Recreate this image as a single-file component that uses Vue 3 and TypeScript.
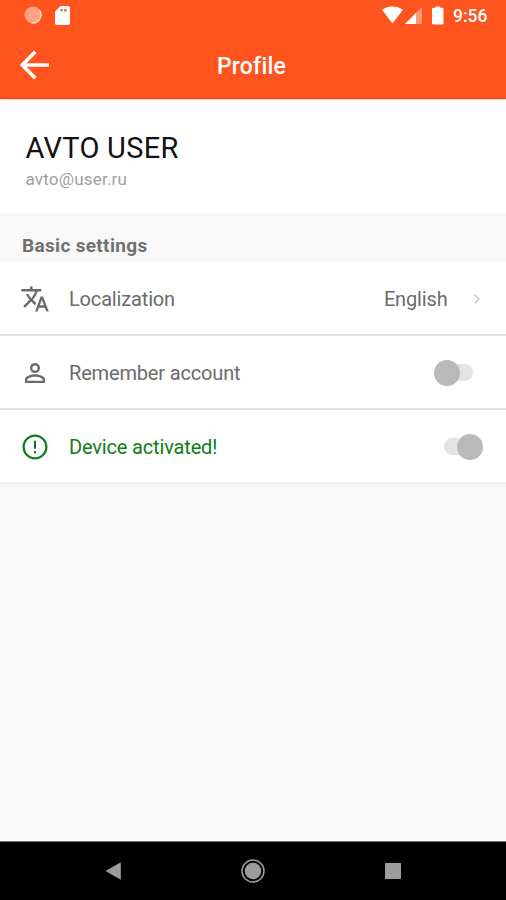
<script setup lang="ts">
import { ref } from 'vue'

interface Setting {
  id: string
  label: string
  icon: string
  kind: 'link' | 'switch'
  value?: string
  on?: boolean
  positive?: boolean
}

const settings = ref<Setting[]>([
  {
    id: 'localization',
    label: 'Localization',
    kind: 'link',
    value: 'English',
    icon: 'M12.87 15.07l-2.54-2.51.03-.03A17.52 17.52 0 0 0 14.07 6H17V4h-7V2H8v2H1v1.99h11.17C11.5 7.92 10.44 9.75 9 11.35 8.07 10.32 7.3 9.19 6.69 8h-2c.73 1.63 1.73 3.17 2.98 4.56l-5.09 5.02L4 19l5-5 3.11 3.11.76-2.04zM18.5 10h-2L12 22h2l1.12-3h4.75L21 22h2l-4.5-12zm-2.62 7l1.62-4.33L19.12 17h-3.24z',
  },
  {
    id: 'remember',
    label: 'Remember account',
    kind: 'switch',
    on: false,
    icon: 'M12 5.9a2.1 2.1 0 1 1 0 4.2 2.1 2.1 0 0 1 0-4.2m0 9c2.97 0 6.1 1.46 6.1 2.1v1.1H5.9V17c0-.64 3.13-2.1 6.1-2.1M12 4C9.79 4 8 5.79 8 8s1.79 4 4 4 4-1.79 4-4-1.79-4-4-4zm0 9c-2.67 0-8 1.34-8 4v3h16v-3c0-2.66-5.33-4-8-4z',
  },
  {
    id: 'device',
    label: 'Device activated!',
    kind: 'switch',
    on: true,
    positive: true,
    icon: 'M11.200 15.200h1.600v1.700h-1.600zm0-8.200h1.600v6.300h-1.600zm.79-5C6.47 2 2 6.48 2 12s4.47 10 9.99 10C17.52 22 22 17.52 22 12S17.52 2 11.99 2zM12 20.200c-4.53 0-8.200-3.670-8.200-8.200s3.670-8.200 8.200-8.200 8.200 3.670 8.200 8.200-3.670 8.200-8.200 8.200z',
  },
])

function activate(item: Setting) {
  if (item.kind === 'switch') item.on = !item.on
}
</script>

<template>
  <div class="screen">
    <header class="top">
      <div class="status">
        <svg class="sync" viewBox="0 0 18 18">
          <circle cx="9" cy="9" r="8.5" fill="#ffa183" />
          <path d="M15.200 4A8 8 0 0 1 7.500 16.800" fill="none" stroke="#ffe3d9" stroke-width="1.3" />
        </svg>
        <svg class="card" viewBox="0 0 15 19">
          <path fill="#fff" fill-rule="evenodd" d="M5.5 0H13a2 2 0 0 1 2 2v15a2 2 0 0 1-2 2H2a2 2 0 0 1-2-2V5.500zM5.500 3v2.500h2.200V3zm3.700 0v2.500h2.300V3z" />
        </svg>
        <span class="gap"></span>
        <svg class="wifi" viewBox="0 0 22 18">
          <path fill="#fff" d="M0 3.500C6-1.200 16-1.200 22 3.500L11 18z" />
        </svg>
        <svg class="signal" viewBox="0 0 17 17">
          <path fill="#fff" fill-opacity=".4" d="M17 0v17H0z" />
          <path fill="#fff" d="M11 6v11H0z" />
        </svg>
        <svg class="battery" viewBox="0 0 12 19">
          <path fill="#fff" d="M3.500 0h5v1.500H10.500Q12 1.500 12 3v14.500q0 1.500-1.500 1.500h-9Q0 19 0 17.500V3Q0 1.500 1.500 1.500h2z" />
        </svg>
        <span class="clock">9:56</span>
      </div>
      <div class="bar">
        <svg class="back" viewBox="0 0 30 30">
          <path d="M15.300 1.800L2.300 15l13 13.200M2.300 15H29" fill="none" stroke="#fff" stroke-width="3.700" />
        </svg>
        <h1>Profile</h1>
      </div>
    </header>

    <section class="user">
      <div class="name">AVTO USER</div>
      <div class="mail">avto@user.ru</div>
    </section>

    <h2 class="heading">Basic settings</h2>

    <ul class="list">
      <li
        v-for="item in settings"
        :key="item.id"
        class="row"
        :class="{ positive: item.positive }"
        @click="activate(item)"
      >
        <svg class="icon" viewBox="0 0 24 24"><path :d="item.icon" fill="currentColor" /></svg>
        <span class="label">{{ item.label }}</span>
        <template v-if="item.kind === 'link'">
          <span class="value">{{ item.value }}</span>
          <svg class="chevron" viewBox="0 0 6 10">
            <path d="M.7.700L5 5 .7 9.300" fill="none" stroke="#c4c4c4" stroke-width="1.400" />
          </svg>
        </template>
        <span v-else class="switch" :class="{ on: item.on }">
          <span class="track"></span>
          <span class="thumb"></span>
        </span>
      </li>
    </ul>

    <nav class="nav">
      <svg viewBox="0 0 24 24"><path d="M4.500 12L19.800 3.200v17.600z" fill="#9c9c9c" /></svg>
      <svg viewBox="0 0 24 24">
        <circle cx="12" cy="12" r="11" fill="none" stroke="#9c9c9c" stroke-width="1.500" />
        <circle cx="12" cy="12" r="8.300" fill="#9c9c9c" />
      </svg>
      <svg viewBox="0 0 24 24"><rect x="4" y="4" width="16" height="16" rx=".6" fill="#9c9c9c" /></svg>
    </nav>
  </div>
</template>

<style>
body {
  margin: 0;
}
</style>

<style scoped>
.screen {
  width: 506px;
  height: 900px;
  display: flex;
  flex-direction: column;
  overflow: hidden;
  background: #f8f8f8;
  font-family: Roboto, 'Liberation Sans', sans-serif;
  color: #6b6b6b;
}
svg {
  display: block;
  flex: none;
}
.top {
  box-sizing: border-box;
  height: 99px;
  background: #ff541d;
  border-bottom: 1px solid #ea4310;
  box-shadow: 0 1px 2px rgba(90, 130, 150, 0.3);
  position: relative;
}
.status {
  height: 30px;
  display: flex;
  align-items: center;
  padding: 0 18.500px 0 23.500px;
}
.sync {
  width: 18px;
  height: 18px;
}
.card {
  width: 15px;
  height: 19px;
  margin-left: 13.500px;
}
.gap {
  flex: 1;
}
.wifi {
  width: 21px;
  height: 18px;
}
.signal {
  width: 17px;
  height: 17px;
  margin: 1px 0 0 2.500px;
}
.battery {
  width: 11.500px;
  height: 19px;
  margin: 0 9.500px 0 10px;
}
.clock {
  color: #fff;
  font-size: 17.500px;
  font-weight: 500;
  line-height: 30px;
  padding-top: 2px;
}
.bar {
  display: grid;
  grid-template-columns: 50px 1fr 50px;
  align-items: center;
  height: 68px;
}
.back {
  width: 30px;
  height: 30px;
  margin: 1.500px 0 0 20px;
}
h1 {
  margin: 5px 3px 0 0;
  color: #fff;
  font-size: 23px;
  letter-spacing: 0.2px;
  font-weight: 500;
  line-height: 30px;
  text-align: center;
}
.user {
  box-sizing: border-box;
  height: 114px;
  background: #fff;
  padding: 31px 26px 0 25.500px;
}
.name {
  color: #111;
  font-size: 29px;
  letter-spacing: 0.28px;
  line-height: 36px;
}
.mail {
  color: #a0a0a0;
  font-size: 17px;
  letter-spacing: 0.2px;
  line-height: 22px;
  margin-top: 2px;
}
.heading {
  box-sizing: border-box;
  height: 49px;
  margin: 0;
  padding: 20px 22px 0;
  font-size: 19px;
  letter-spacing: 0.33px;
  font-weight: 700;
  line-height: 26px;
  color: #707070;
}
.list {
  margin: 0;
  padding: 0;
  list-style: none;
}
.row {
  box-sizing: border-box;
  height: 74px;
  display: flex;
  align-items: center;
  padding: 0 23px 0 19.700px;
  background: #fff;
  border-bottom: 2px solid #e2e2e2;
  font-size: 20px;
  letter-spacing: -0.16px;
  line-height: 28px;
}
.row:last-child {
  border-bottom-color: #efefef;
}
.positive {
  color: #0f7d16;
}
.icon {
  width: 30px;
  height: 30px;
  margin-top: 1px;
}
.label {
  flex: 1;
  margin-left: 19.300px;
  padding-top: 2px;
}
.value {
  padding-top: 2px;
}
.chevron {
  width: 6px;
  height: 10px;
  margin: 1px 3px 0 26.500px;
}
.switch {
  width: 49.500px;
  height: 26px;
  display: grid;
  align-items: center;
  margin-top: 1px;
}
.track,
.thumb {
  grid-area: 1 / 1;
}
.track {
  width: 29px;
  height: 17px;
  margin-left: 10.500px;
  border-radius: 9px;
  background: #e3e3e3;
}
.thumb {
  width: 26px;
  height: 26px;
  border-radius: 50%;
  background: #b9b9b9;
}
.switch.on .thumb {
  justify-self: end;
}
.nav {
  box-sizing: border-box;
  height: 59px;
  margin-top: auto;
  display: flex;
  align-items: center;
  justify-content: space-between;
  padding: 0 101px;
  background: #000;
  border-top: 1px solid #777;
  box-shadow: 0 -1px 0 #fff;
}
.nav svg {
  width: 24px;
  height: 24px;
}
</style>
